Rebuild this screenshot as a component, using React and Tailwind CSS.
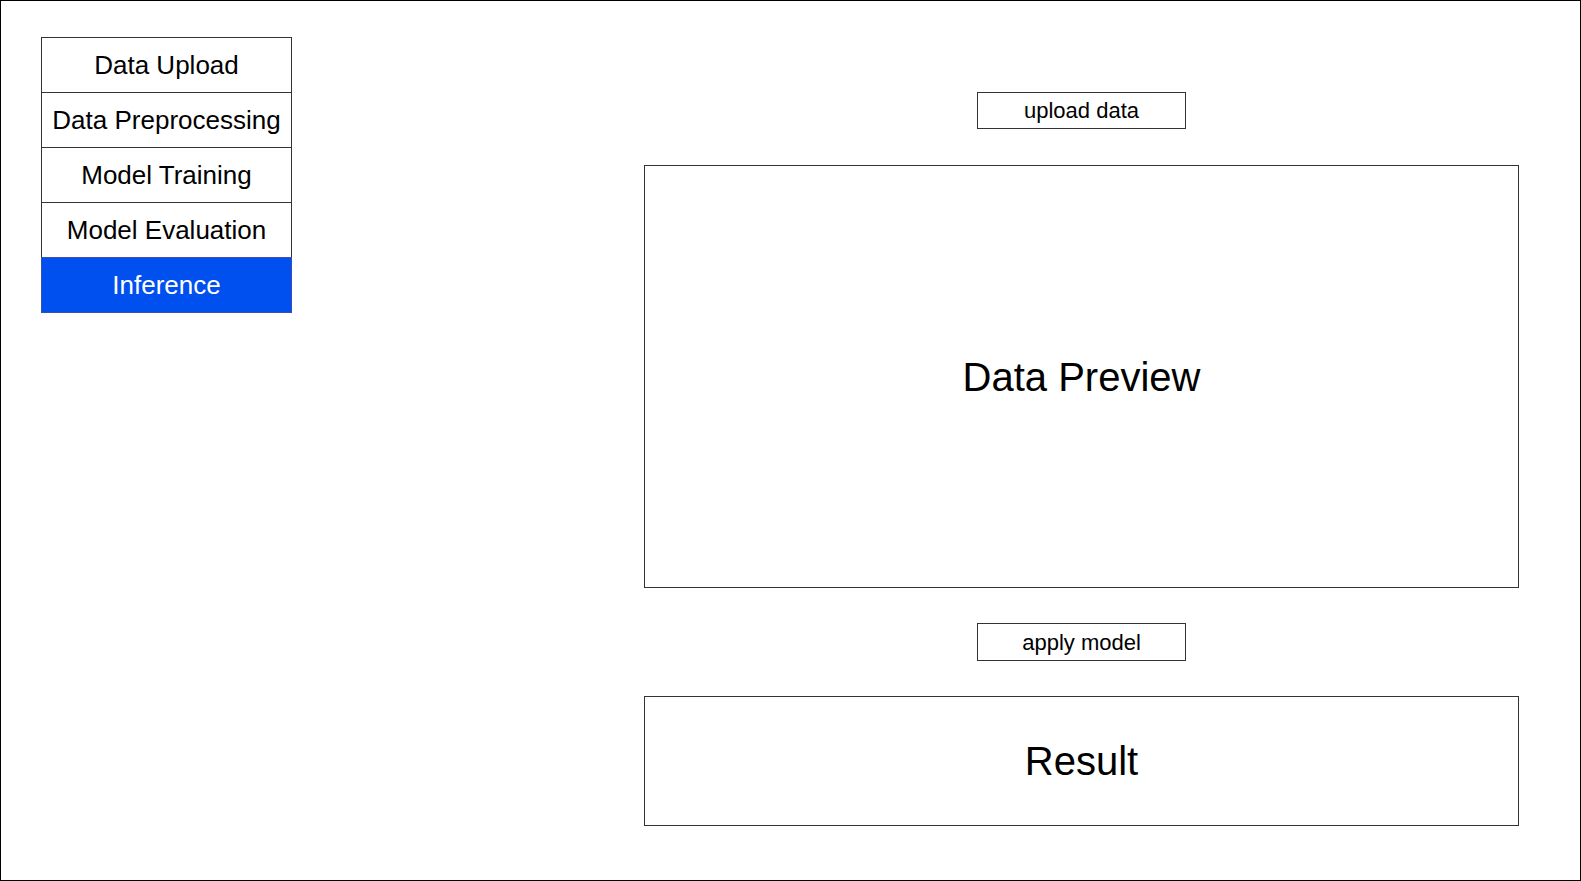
import React from "react";

const items = [
  "Data Upload",
  "Data Preprocessing",
  "Model Training",
  "Model Evaluation",
];

export default function App() {
  return (
    <div
      className="w-[1581px] h-[881px] border border-black bg-white flex items-start"
      style={{ fontFamily: '"Liberation Sans", Arial, sans-serif' }}
    >
      <div className="ml-[40px] mt-[36px] w-[251px] flex flex-col">
        {items.map((t, i) => (
          <div
            key={t}
            className={
              "h-[56px] border border-[#333333] flex items-center justify-center text-[26px] text-black " +
              (i > 0 ? "-mt-px" : "")
            }
          >
            {t}
          </div>
        ))}
        <div className="h-[56px] -mt-px border border-[#3a4fb0] bg-[#0050ef] flex items-center justify-center text-[26px] text-white">
          Inference
        </div>
      </div>
      <div className="ml-[352px] pt-[91px] w-[875px] flex flex-col items-center">
        <div className="w-[209px] h-[37px] border border-[#333333] flex items-center justify-center text-[22px] text-black">
          upload data
        </div>
        <div className="mt-[36px] w-[875px] h-[423px] border border-[#333333] flex items-center justify-center text-[40px] text-black">
          Data Preview
        </div>
        <div className="mt-[35px] w-[209px] h-[38px] border border-[#333333] flex items-center justify-center text-[22px] text-black">
          apply model
        </div>
        <div className="mt-[35px] w-[875px] h-[130px] border border-[#333333] flex items-center justify-center text-[40px] text-black">
          Result
        </div>
      </div>
    </div>
  );
}
